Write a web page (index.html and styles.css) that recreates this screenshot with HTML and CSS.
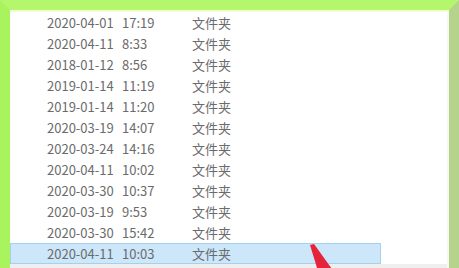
FILE: index.html
```html
<!DOCTYPE html>
<html lang="zh">
<head>
<meta charset="utf-8">
<link rel="stylesheet" href="styles.css">
</head>
<body>
<div class="frame">
  <div class="panel">
    <div class="list">
      <div class="row"><span class="date">2020-04-01</span><span class="time">17:19</span><span class="type">文件夹</span></div>
      <div class="row"><span class="date">2020-04-11</span><span class="time">8:33</span><span class="type">文件夹</span></div>
      <div class="row"><span class="date">2018-01-12</span><span class="time">8:56</span><span class="type">文件夹</span></div>
      <div class="row"><span class="date">2019-01-14</span><span class="time">11:19</span><span class="type">文件夹</span></div>
      <div class="row"><span class="date">2019-01-14</span><span class="time">11:20</span><span class="type">文件夹</span></div>
      <div class="row"><span class="date">2020-03-19</span><span class="time">14:07</span><span class="type">文件夹</span></div>
      <div class="row"><span class="date">2020-03-24</span><span class="time">14:16</span><span class="type">文件夹</span></div>
      <div class="row"><span class="date">2020-04-11</span><span class="time">10:02</span><span class="type">文件夹</span></div>
      <div class="row"><span class="date">2020-03-30</span><span class="time">10:37</span><span class="type">文件夹</span></div>
      <div class="row"><span class="date">2020-03-19</span><span class="time">9:53</span><span class="type">文件夹</span></div>
      <div class="row"><span class="date">2020-03-30</span><span class="time">15:42</span><span class="type">文件夹</span></div>
      <div class="row selected"><span class="date">2020-04-11</span><span class="time">10:03</span><span class="type">文件夹</span></div>
    </div>
    <div class="statusbar"></div>
  </div>
  <svg class="arrow" width="40" height="30" viewBox="0 0 40 30">
    <polygon points="8,4 12,3 30,28 16,30" fill="#e5243b"/>
  </svg>
</div>
</body>
</html>
```
FILE: styles.css
```css
html, body {
  margin: 0;
  padding: 0;
  background: #ffffff;
}
body {
  width: 459px;
  height: 268px;
  overflow: hidden;
  font-family: "Noto Sans CJK SC", "Noto Sans", sans-serif;
}
.frame {
  position: relative;
  box-sizing: border-box;
  width: 459px;
  height: 268px;
  border-top: 10px solid #b4f76c;
  border-left: 10px solid #a9f45e;
  border-right: 10px solid #b6d38c;
}
.panel {
  display: flex;
  flex-direction: column;
  height: 100%;
  background: #ffffff;
  border-top: 2px solid #f2ffd0;
  border-right: 2px solid #f6f9f0;
  box-sizing: border-box;
}
.list {
  flex: 1;
  display: flex;
  flex-direction: column;
}
.row {
  display: flex;
  align-items: center;
  height: 21px;
  width: 371px;
  box-sizing: border-box;
  padding-left: 36px;
  font-size: 13px;
  color: #6b6b6b;
  border: 1px solid transparent;
}
.row.selected {
  background: #cce6fa;
  border-color: #a6d0f0;
}
.date { width: 75px; }
.time { width: 70px; }
.statusbar {
  height: 4px;
  background: #efefef;
}
.arrow {
  position: absolute;
  left: 292px;
  top: 231px;
}
```
